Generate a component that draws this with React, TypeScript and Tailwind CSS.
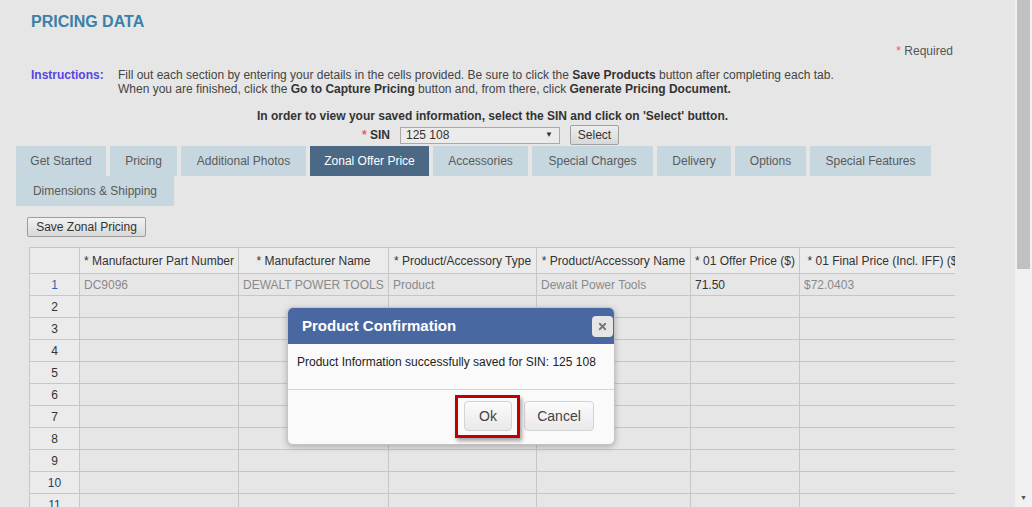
import type { FC } from 'react';
import { X } from 'lucide-react';

const tabs = [
  { label: 'Get Started', width: 'w-[90px]' },
  { label: 'Pricing', width: 'w-[67px]' },
  { label: 'Additional Photos', width: 'w-[125px]' },
  { label: 'Zonal Offer Price', width: 'w-[119px]', active: true },
  { label: 'Accessories', width: 'w-[95px]' },
  { label: 'Special Charges', width: 'w-[121px]' },
  { label: 'Delivery', width: 'w-[74px]' },
  { label: 'Options', width: 'w-[71px]' },
  { label: 'Special Features', width: 'w-[121px]' },
  { label: 'Dimensions & Shipping', width: 'w-[158px]' },
];

const columns = [
  { label: '', width: 'w-[50px]' },
  { label: '* Manufacturer Part Number', width: 'w-[159px]' },
  { label: '* Manufacturer Name', width: 'w-[150px]' },
  { label: '* Product/Accessory Type', width: 'w-[148px]' },
  { label: '* Product/Accessory Name', width: 'w-[154px]' },
  { label: '* 01 Offer Price ($)', width: 'w-[109px]' },
  { label: '* 01 Final Price (Incl. IFF) ($)', width: 'w-[170px]' },
];

const firstRow = ['DC9096', 'DEWALT POWER TOOLS', 'Product', 'Dewalt Power Tools', '71.50', '$72.0403'];

const Req: FC = () => <span className="text-[#e06060]">*</span>;

// Confirmation dialog shown over the grid
const ConfirmDialog: FC = () => (
  <div className="absolute left-[287px] top-[307px] w-[328px] rounded-[6px] border border-[#c4c4c4] bg-[#fafafa] shadow-[0_2px_6px_rgba(0,0,0,0.25)]">
    <div className="flex h-[36px] items-center justify-between rounded-t-[5px] bg-[#4968a1] pl-[14px] pr-[1px]">
      <span className="text-[15px] font-bold text-white">Product Confirmation</span>
      <button
        type="button"
        className="flex h-[21px] w-[21px] items-center justify-center rounded-[4px] bg-[#e6e6e6] text-[#777]"
      >
        <X size={11} strokeWidth={4} />
      </button>
    </div>
    <div className="h-[45px] px-[9px] pt-[11px] text-[12px] leading-[14px] text-[#222]">
      Product Information successfully saved for SIN: 125 108
    </div>
    <div className="flex h-[55px] items-start justify-end gap-[12px] border-t border-[#d6d6d6] pr-[20px] pt-[11px]">
      <div className="relative">
        <div className="absolute -left-[9px] -top-[6px] h-[43px] w-[65px] border-[3px] border-[#c00000] shadow-[2px_3px_4px_rgba(0,0,0,0.35)]" />
        <button
          type="button"
          className="h-[30px] w-[48px] rounded-[4px] border border-[#d4d4d4] bg-gradient-to-b from-[#fbfbfb] to-[#e9e9e9] text-[14px] text-[#444]"
        >
          Ok
        </button>
      </div>
      <button
        type="button"
        className="h-[30px] w-[70px] rounded-[4px] border border-[#d4d4d4] bg-gradient-to-b from-[#fbfbfb] to-[#e9e9e9] text-[14px] text-[#444]"
      >
        Cancel
      </button>
    </div>
  </div>
);

const App: FC = () => {
  return (
    <div className="flex h-[507px] w-[1032px] overflow-hidden bg-[#e6e6e6] font-['Liberation_Sans',Arial,sans-serif] text-[#333]">
      <div className="relative flex-1 overflow-hidden">
        <h1 className="mt-[11px] h-[21px] pl-[31px] text-[16px] font-bold leading-[21px] text-[#3a80a8]">PRICING DATA</h1>

        <div className="mt-[12px] flex h-[14px] justify-end pr-[62px] text-[12px] leading-[14px] text-[#555]">
          <span>
            <Req /> Required
          </span>
        </div>

        {/* Instructions */}
        <div className="mt-[10px] flex pl-[31px] text-[12px] leading-[14px]">
          <span className="w-[87px] shrink-0 font-bold text-[#5546e0]">Instructions:</span>
          <div className="text-[#444]">
            <p>
              Fill out each section by entering your details in the cells provided. Be sure to click the{' '}
              <b className="text-[#333]">Save Products</b> button after completing each tab.
            </p>
            <p>
              When you are finished, click the <b className="text-[#333]">Go to Capture Pricing</b> button and, from there, click{' '}
              <b className="text-[#333]">Generate Pricing Document.</b>
            </p>
          </div>
        </div>

        {/* SIN selector */}
        <div className="pl-[16px] pr-[46px]">
          <p className="mt-[13px] text-center text-[12px] font-bold leading-[14px] text-[#333]">
            In order to view your saved information, select the SIN and click on 'Select' button.
          </p>
          <div className="mt-[2px] flex h-[20px] items-center justify-center pr-[4px] text-[12px]">
            <span className="mr-[10px] font-bold">
              <Req /> SIN
            </span>
            <div className="flex h-[17px] w-[160px] items-center justify-between border border-[#a9a9a9] bg-[#ebebeb] pl-[5px] pr-[6px] text-[#333]">
              <span>125 108</span>
              <span className="text-[8px]">▼</span>
            </div>
            <button
              type="button"
              className="ml-[10px] h-[20px] w-[49px] rounded-[2px] border border-[#a0a0a0] bg-gradient-to-b from-[#eeeeee] to-[#d8d8d8] text-[12px] text-[#333]"
            >
              Select
            </button>
          </div>
        </div>

        {/* Tabs */}
        <div className="mt-[1px] flex flex-wrap gap-x-[4px] pl-[16px] pr-[60px]">
          {tabs.map((tab) => (
            <div
              key={tab.label}
              className={`flex h-[30px] items-center justify-center text-[12px] ${tab.width} ${
                tab.active ? 'bg-[#4b6885] text-white' : 'bg-[#c6d7df] text-[#5a5a5a]'
              }`}
            >
              {tab.label}
            </div>
          ))}
        </div>

        <div className="mt-[8px] pl-[27px]">
          <button
            type="button"
            className="h-[20px] w-[119px] rounded-[2px] border border-[#9c9c9c] bg-gradient-to-b from-[#f2f2f2] to-[#d9d9d9] text-[12px] text-[#333]"
          >
            Save Zonal Pricing
          </button>
        </div>

        {/* Grid */}
        <div className="ml-[29px] mt-[9px] w-[926px] overflow-hidden">
          <table className="w-[940px] table-fixed border-collapse text-[12px]">
            <colgroup>
              {columns.map((c, i) => (
                <col key={i} className={c.width} />
              ))}
            </colgroup>
            <thead>
              <tr className="h-[26px] bg-[#ebebeb]">
                {columns.map((c, i) => (
                  <th
                    key={i}
                    className="overflow-hidden whitespace-nowrap border border-[#c6c6c6] px-[3px] text-center font-normal text-[#333]"
                  >
                    {c.label}
                  </th>
                ))}
              </tr>
            </thead>
            <tbody>
              {Array.from({ length: 12 }, (_, r) => (
                <tr key={r} className="h-[22px]">
                  <td
                    className={`border border-[#c6c6c6] bg-[#ebebeb] text-center ${
                      r === 0 ? 'text-[#2f62b8]' : r >= 9 ? 'text-[#26406e]' : 'text-[#333]'
                    }`}
                  >
                    {r + 1}
                  </td>
                  {firstRow.map((v, c) => (
                    <td
                      key={c}
                      className={`overflow-hidden whitespace-nowrap border border-[#c6c6c6] px-[4px] ${
                        c === 4 ? 'text-[#333]' : 'text-[#8a8a8a]'
                      }`}
                    >
                      {r === 0 ? v : ''}
                    </td>
                  ))}
                </tr>
              ))}
            </tbody>
          </table>
        </div>

        <ConfirmDialog />
      </div>

      {/* Scrollbar */}
      <div className="flex w-[17px] flex-col bg-[#f1f1f1]">
        <div className="mx-[2px] h-[269px] bg-[#c1c1c1]" />
        <div className="flex-1" />
        <div className="flex h-[17px] items-center justify-center text-[7px] text-[#505050]">▼</div>
      </div>
    </div>
  );
};

export default App;
